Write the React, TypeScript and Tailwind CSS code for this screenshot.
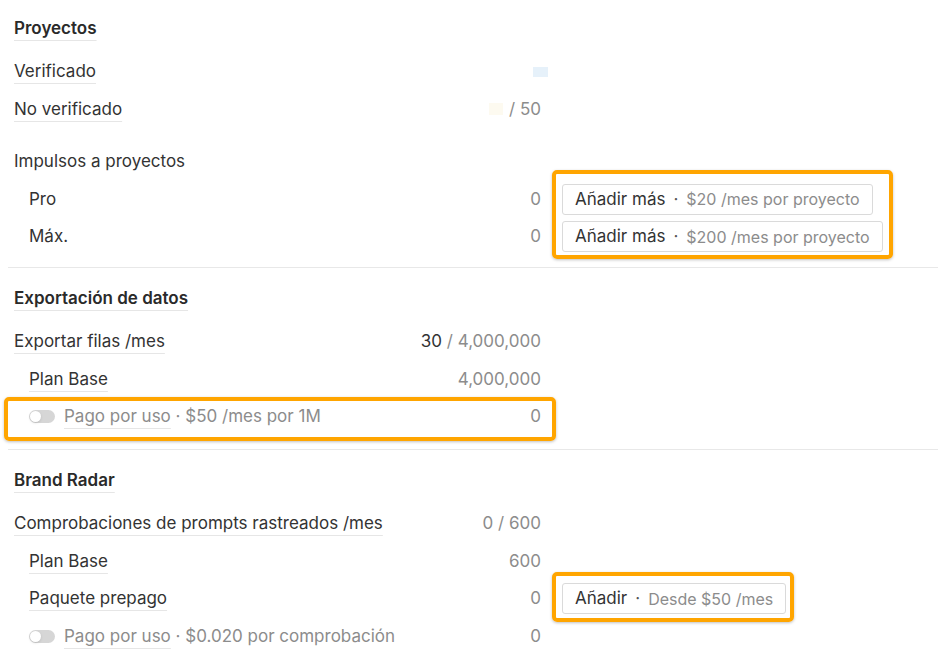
import React from "react";

const font = { fontFamily: "Inter, 'Noto Sans', sans-serif" };

function Label({ children }: { children: React.ReactNode }) {
  return (
    <span className="underline decoration-[#e6e6e6] decoration-1 underline-offset-[6px]">
      {children}
    </span>
  );
}

function Toggle() {
  return (
    <span className="relative inline-flex h-[13px] w-[26px] shrink-0 items-center rounded-full bg-[#d6d6d6]">
      <span className="absolute left-[1px] h-[11px] w-[11px] rounded-full bg-white shadow-sm" />
    </span>
  );
}

function AddButton({ main, price }: { main: string; price: string }) {
  return (
    <button className="flex h-[31px] items-center rounded-[3px] border border-[#dadada] bg-white pl-[12px] pr-[12px] text-[17px] text-[#333]">
      <span>{main}</span>
      <span className="mx-[8px] text-[#555]">·</span>
      <span className="text-[16px] text-[#8c8c8c]">{price}</span>
    </button>
  );
}

function Row({
  label,
  value,
  indent,
  right,
}: {
  label: React.ReactNode;
  value: React.ReactNode;
  indent?: boolean;
  right?: React.ReactNode;
}) {
  return (
    <div className="flex h-[37.5px] items-center">
      <div
        className={`flex w-[527px] items-center justify-between ${indent ? "pl-[15px]" : ""}`}
      >
        <div className="flex items-center text-[#333]">{label}</div>
        <div className="text-[#8c8c8c]">{value}</div>
      </div>
      {right && <div className="ml-[21px]">{right}</div>}
    </div>
  );
}

function Header({ children }: { children: React.ReactNode }) {
  return (
    <div className="flex h-[38px] items-center text-[17px] font-semibold text-[#2a2a2a]">
      <Label>{children}</Label>
    </div>
  );
}

export default function App() {
  return (
    <div className="relative min-h-screen bg-white text-[17px]" style={font}>
      {/* Proyectos */}
      <section className="pl-[14px] pt-[10px] pb-[11.5px]">
        <Header>Proyectos</Header>
        <div className="mt-[5px]">
          <Row
            label={<Label>Verificado</Label>}
            value={<span className="mr-[-7px] inline-block h-[10px] w-[15px] bg-[#e6f1fa]" />}
          />
          <Row
            label={<Label>No verificado</Label>}
            value={
              <span className="flex items-center">
                <span className="mr-[6px] inline-block h-[12px] w-[14px] bg-[#fdfaf0]" />
                / 50
              </span>
            }
          />
        </div>
        <div className="mt-[15px]">
          <Row label="Impulsos a proyectos" value="" />
          <Row
            indent
            label="Pro"
            value="0"
            right={<AddButton main="Añadir más" price="$20 /mes por proyecto" />}
          />
          <Row
            indent
            label="Máx."
            value="0"
            right={<AddButton main="Añadir más" price="$200 /mes por proyecto" />}
          />
        </div>
      </section>

      {/* Exportación de datos */}
      <div className="ml-[8px] border-t border-[#e8e8e8]" />
      <section className="pl-[14px] pt-[12px] pb-[13.5px]">
        <Header>Exportación de datos</Header>
        <div className="mt-[5px]">
          <Row
            label={<Label>Exportar filas /mes</Label>}
            value={
              <span>
                <span className="text-[#333]">30</span> / 4,000,000
              </span>
            }
          />
          <Row indent label={<Label>Plan Base</Label>} value="4,000,000" />
          <Row
            indent
            label={
              <span className="flex items-center gap-[9px] text-[#8c8c8c]">
                <Toggle />
                <span>
                  <Label>Pago por uso</Label> · $50 /mes por 1M
                </span>
              </span>
            }
            value="0"
          />
        </div>
      </section>

      {/* Brand Radar */}
      <div className="ml-[8px] border-t border-[#e8e8e8]" />
      <section className="pl-[14px] pt-[12px] pb-[10px]">
        <Header>Brand Radar</Header>
        <div className="mt-[5px]">
          <Row
            label={<Label>Comprobaciones de prompts rastreados /mes</Label>}
            value="0 / 600"
          />
          <Row indent label={<Label>Plan Base</Label>} value="600" />
          <Row
            indent
            label={<Label>Paquete prepago</Label>}
            value="0"
            right={<AddButton main="Añadir" price="Desde $50 /mes" />}
          />
          <Row
            indent
            label={
              <span className="flex items-center gap-[9px] text-[#8c8c8c]">
                <Toggle />
                <span>
                  <Label>Pago por uso</Label> · $0.020 por comprobación
                </span>
              </span>
            }
            value="0"
          />
        </div>
      </section>

      {/* highlight annotations */}
      <div className="pointer-events-none absolute left-[552px] top-[170px] h-[89px] w-[341px] rounded-[5px] border-[4px] border-[#ffa500] shadow-[0_1px_3px_rgba(0,0,0,0.25)]" />
      <div className="pointer-events-none absolute left-[4px] top-[397px] h-[44px] w-[552px] rounded-[5px] border-[4px] border-[#ffa500] shadow-[0_1px_3px_rgba(0,0,0,0.25)]" />
      <div className="pointer-events-none absolute left-[552px] top-[572px] h-[50px] w-[242px] rounded-[5px] border-[4px] border-[#ffa500] shadow-[0_1px_3px_rgba(0,0,0,0.25)]" />
    </div>
  );
}
